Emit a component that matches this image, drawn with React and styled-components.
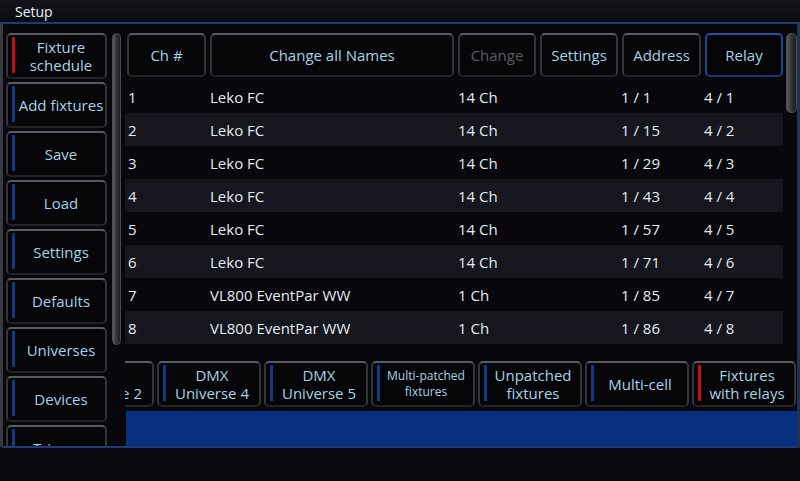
import React from "react";
import styled, { createGlobalStyle } from "styled-components";

const Global = createGlobalStyle`
  html, body { margin: 0; padding: 0; background: #08080e; }
  body { font-family: "Open Sans", "Noto Sans", sans-serif; }
  #root { width: 800px; height: 481px; }
`;

const Screen = styled.div`
  width: 800px;
  height: 481px;
  display: flex;
  flex-direction: column;
  background: #08080e;
  overflow: hidden;
`;

const TitleBar = styled.div`
  height: 24px;
  flex: none;
  display: flex;
  align-items: center;
  padding-left: 15px;
  color: #eef2f4;
  font-size: 14px;
  background: linear-gradient(#14141c, #0a0a10);
  border-bottom: 2px solid #1d3b74;
  box-sizing: border-box;
`;

const Window = styled.div`
  height: 424px;
  flex: none;
  display: flex;
  box-sizing: border-box;
  background: #07070c;
  border-left: 3px solid #3a3a42;
  border-right: 3px solid #23324f;
  border-bottom: 2px solid #1d3b74;
  border-bottom-left-radius: 4px;
  overflow: hidden;
`;

const Sidebar = styled.div`
  width: 102px;
  flex: none;
  padding: 9px 0 0 3px;
  display: flex;
  flex-direction: column;
  gap: 3px;
  overflow: hidden;
`;

const ScrollTrack = styled.div`
  width: 17px;
  flex: none;
  display: flex;
  justify-content: center;
  padding-top: 9px;
`;

const Thumb = styled.div`
  width: ${(p) => p.$w}px;
  height: ${(p) => p.$h}px;
  box-sizing: border-box;
  border-radius: 5px;
  border: 1px solid #4c4c54;
  background: linear-gradient(to right, #5a5a62, #2c2c33 60%, #1e1e24);
`;

const Btn = styled.div`
  position: relative;
  box-sizing: border-box;
  width: ${(p) => p.$w}px;
  height: ${(p) => p.$h || 46}px;
  flex: none;
  border-radius: 5px;
  border: 2px solid #34343b;
  border-top-color: #5a5a61;
  border-bottom-color: #232328;
  background: #060609;
  display: flex;
  align-items: center;
  justify-content: center;
  text-align: center;
  padding-left: ${(p) => (p.$pad != null ? p.$pad : 0)}px;
  color: ${(p) => (p.$disabled ? "#5a5e64" : "#a3d3e6")};
  font-size: ${(p) => p.$fs || 15}px;
  line-height: ${(p) => p.$lh || 18}px;
  ${(p) =>
    p.$selected &&
    `border-color: #1b4690; border-top-color: #24519c; border-bottom-color: #163a78;`}
`;

const Indicator = styled.span`
  position: absolute;
  left: 4px;
  top: 2px;
  bottom: 4px;
  width: 3px;
  background: ${(p) => (p.$red ? "#c0101e" : "#123a84")};
`;

const Main = styled.div`
  flex: 1;
  min-width: 0;
  display: flex;
  flex-direction: column;
`;

const TableArea = styled.div`
  display: flex;
  height: 328px;
  flex: none;
`;

const Table = styled.div`
  width: 658px;
  flex: none;
  display: flex;
  flex-direction: column;
`;

const HeaderRow = styled.div`
  display: flex;
  gap: 4px;
  padding: 9px 0 0 2px;
`;

const Rows = styled.div`
  margin-top: 3px;
  display: flex;
  flex-direction: column;
`;

const Row = styled.div`
  height: 33px;
  display: grid;
  grid-template-columns: 82px 248px 163px 83px 1fr;
  align-items: center;
  padding-left: 3px;
  background: ${(p) => (p.$alt ? "#16161e" : "transparent")};
  color: #e4ecf0;
  font-size: 15px;
`;

const RightScroll = styled.div`
  flex: none;
  padding: 9px 0 0 3px;
`;

const TabsClip = styled.div`
  margin-top: 9px;
  height: 46px;
  overflow: hidden;
  flex: none;
  padding-left: 1px;
`;

const TabsStrip = styled.div`
  display: flex;
  gap: 3px;
`;

const BlueBar = styled.div`
  margin: 4px 0 0 1px;
  flex: 1;
  background: #073080;
`;

const BottomStrip = styled.div`
  flex: 1;
  background: #09090f;
`;

const Label = styled.span`
  white-space: pre-line;
`;

const sideItems = [
  { t: "Fixture\nschedule", red: true },
  { t: "Add fixtures" },
  { t: "Save" },
  { t: "Load" },
  { t: "Settings" },
  { t: "Defaults" },
  { t: "Universes" },
  { t: "Devices" },
  { t: "Triggers" },
];

const headers = [
  { t: "Ch #", w: 79 },
  { t: "Change all Names", w: 244 },
  { t: "Change", w: 78, disabled: true },
  { t: "Settings", w: 78 },
  { t: "Address", w: 79 },
  { t: "Relay", w: 78, selected: true },
];

const rows = [
  ["1", "Leko FC", "14 Ch", "1 / 1", "4 / 1"],
  ["2", "Leko FC", "14 Ch", "1 / 15", "4 / 2"],
  ["3", "Leko FC", "14 Ch", "1 / 29", "4 / 3"],
  ["4", "Leko FC", "14 Ch", "1 / 43", "4 / 4"],
  ["5", "Leko FC", "14 Ch", "1 / 57", "4 / 5"],
  ["6", "Leko FC", "14 Ch", "1 / 71", "4 / 6"],
  ["7", "VL800 EventPar WW", "1 Ch", "1 / 85", "4 / 7"],
  ["8", "VL800 EventPar WW", "1 Ch", "1 / 86", "4 / 8"],
];

const tabs = [
  { t: "DMX\nUniverse 2" },
  { t: "DMX\nUniverse 4" },
  { t: "DMX\nUniverse 5" },
  { t: "Multi-patched\nfixtures", fs: 12, lh: 16 },
  { t: "Unpatched\nfixtures" },
  { t: "Multi-cell" },
  { t: "Fixtures\nwith relays", red: true },
];

export default function App() {
  return (
    <Screen>
      <Global />
      <TitleBar>Setup</TitleBar>
      <Window>
        <Sidebar>
          {sideItems.map((s) => (
            <Btn key={s.t} $w={101} $pad={9}>
              <Indicator $red={s.red} />
              <Label>{s.t}</Label>
            </Btn>
          ))}
        </Sidebar>
        <ScrollTrack>
          <Thumb $w={9} $h={312} />
        </ScrollTrack>
        <Main>
          <TableArea>
            <Table>
              <HeaderRow>
                {headers.map((h) => (
                  <Btn
                    key={h.t}
                    $w={h.w}
                    $h={44}
                    $disabled={h.disabled}
                    $selected={h.selected}
                  >
                    {h.t}
                  </Btn>
                ))}
              </HeaderRow>
              <Rows>
                {rows.map((r, i) => (
                  <Row key={r[0]} $alt={i % 2 === 1}>
                    {r.map((c, j) => (
                      <span key={j}>{c}</span>
                    ))}
                  </Row>
                ))}
              </Rows>
            </Table>
            <RightScroll>
              <Thumb $w={11} $h={80} />
            </RightScroll>
          </TableArea>
          <TabsClip>
            <TabsStrip style={{ marginLeft: -76 }}>
              {tabs.map((t) => (
                <Btn key={t.t} $w={104} $pad={6} $fs={t.fs} $lh={t.lh}>
                  <Indicator $red={t.red} />
                  <Label>{t.t}</Label>
                </Btn>
              ))}
            </TabsStrip>
          </TabsClip>
          <BlueBar />
        </Main>
      </Window>
      <BottomStrip />
    </Screen>
  );
}
